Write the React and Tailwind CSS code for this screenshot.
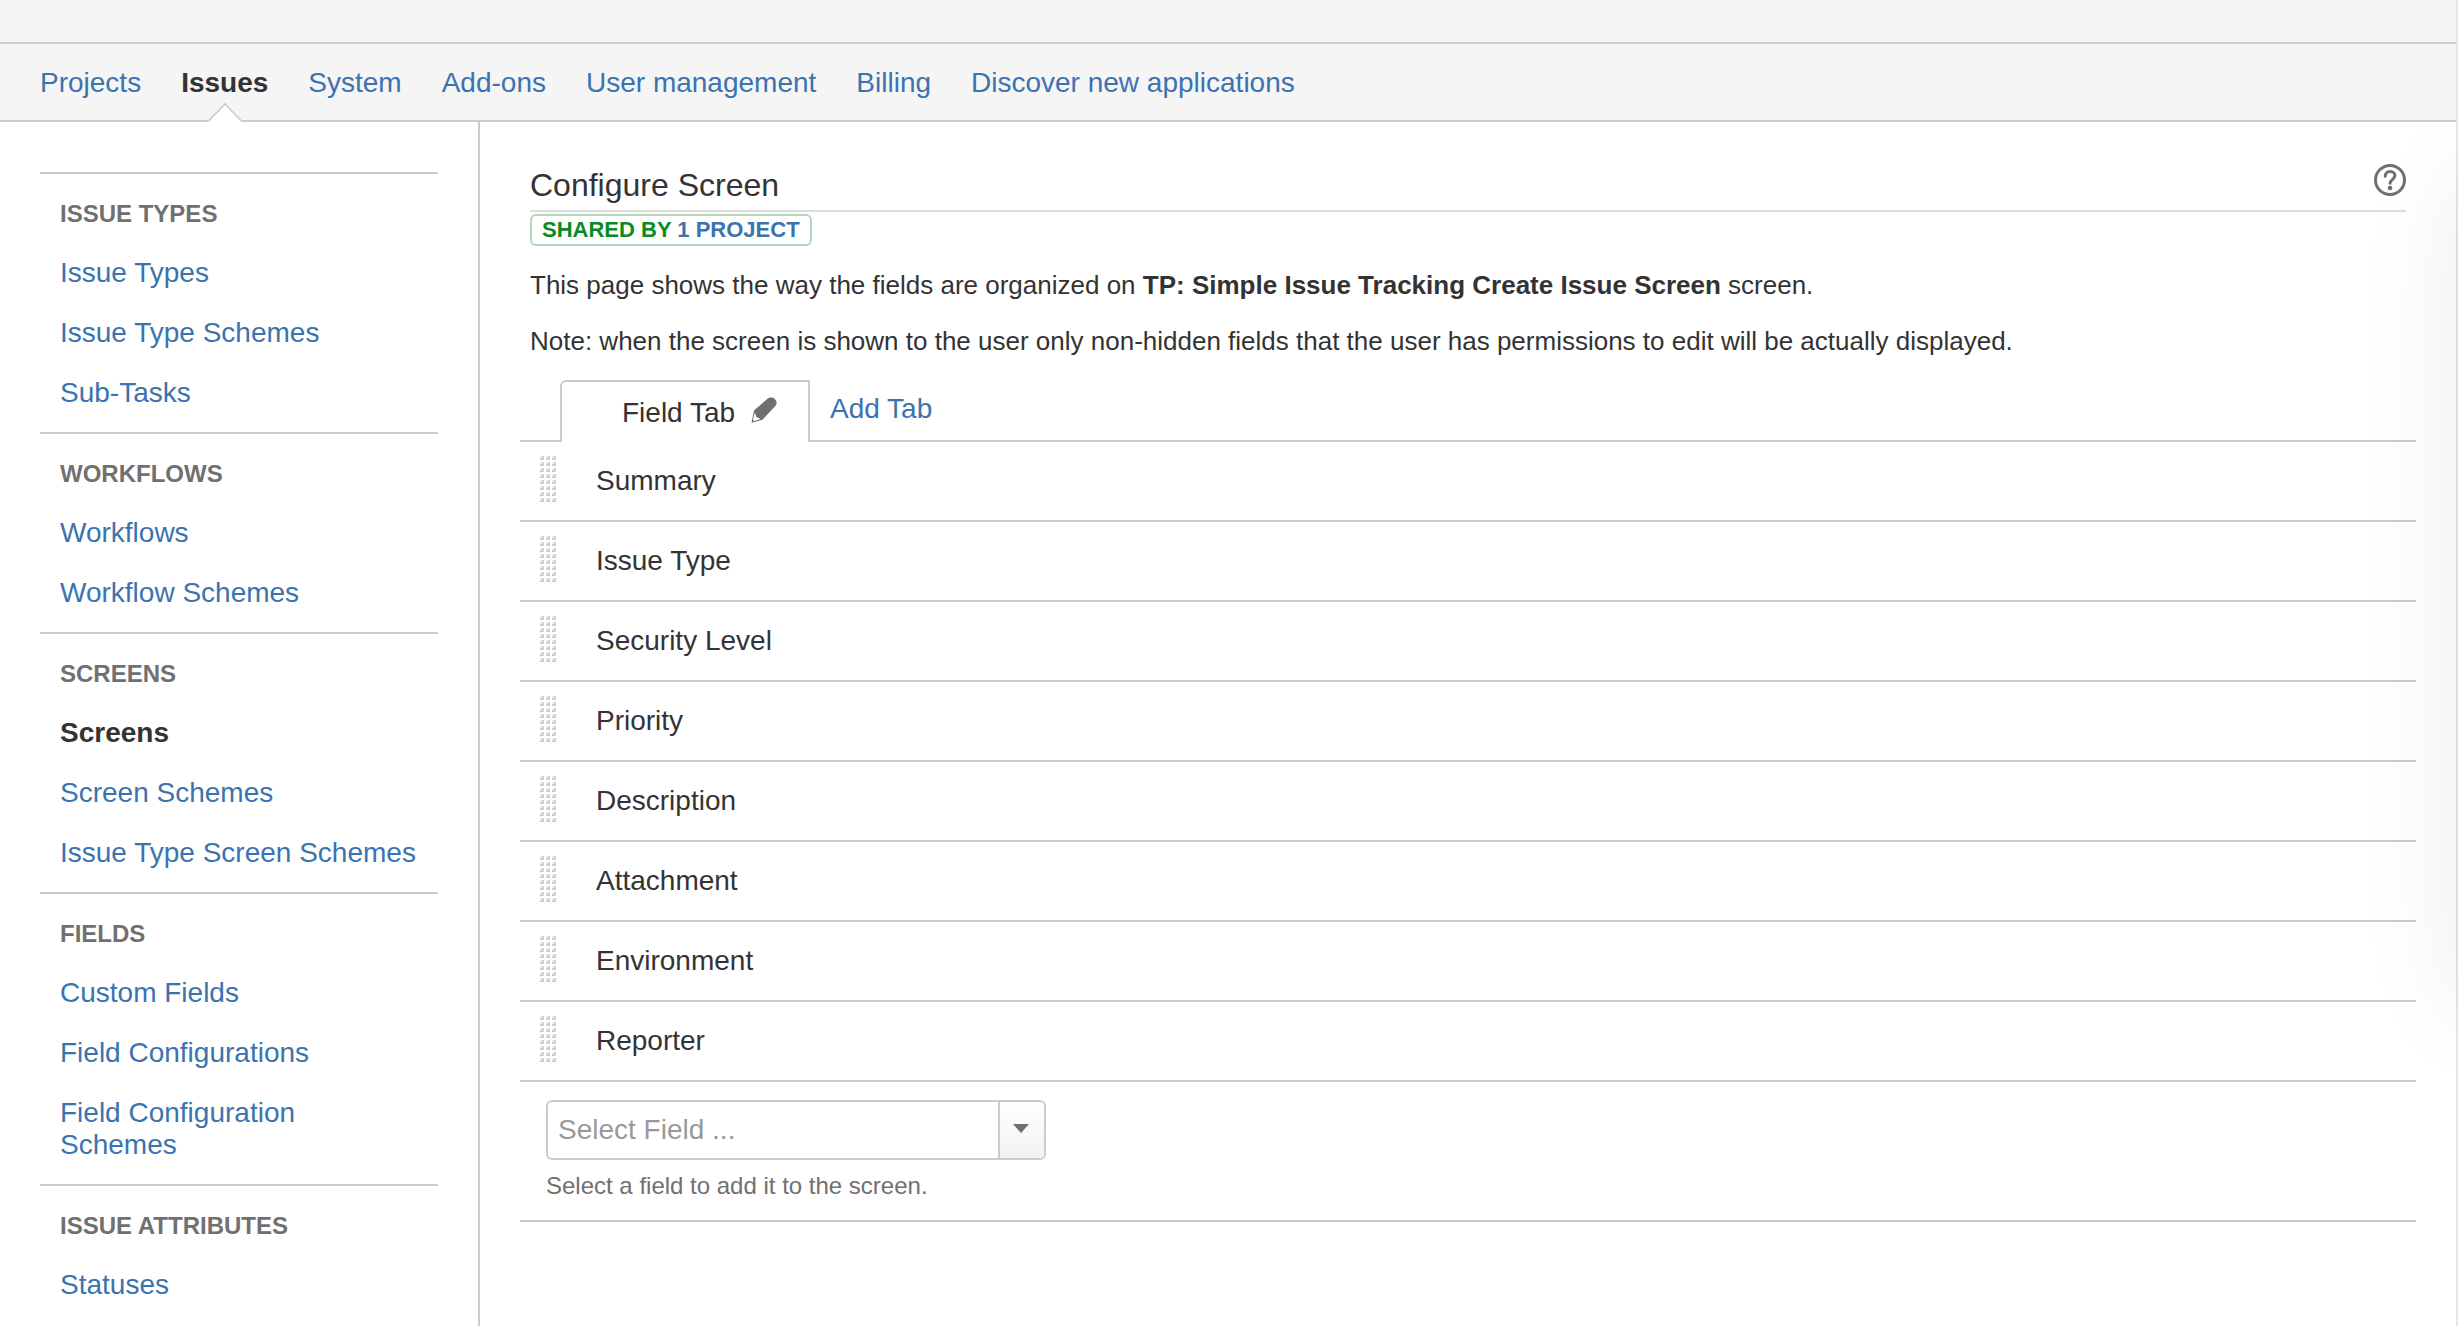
import React from "react";

const navItems = [
  "Projects",
  "Issues",
  "System",
  "Add-ons",
  "User management",
  "Billing",
  "Discover new applications",
];

const sidebarGroups = [
  { title: "ISSUE TYPES", links: ["Issue Types", "Issue Type Schemes", "Sub-Tasks"] },
  { title: "WORKFLOWS", links: ["Workflows", "Workflow Schemes"] },
  { title: "SCREENS", links: ["Screens", "Screen Schemes", "Issue Type Screen Schemes"] },
  { title: "FIELDS", links: ["Custom Fields", "Field Configurations", "Field Configuration Schemes"] },
  { title: "ISSUE ATTRIBUTES", links: ["Statuses"] },
];

const fields = [
  "Summary",
  "Issue Type",
  "Security Level",
  "Priority",
  "Description",
  "Attachment",
  "Environment",
  "Reporter",
];

function TopNav() {
  return (
    <header className="bg-[#f5f5f5]">
      <div className="h-11 border-b-2 border-[#ccc]" />
      <nav className="border-b-2 border-[#ccc] px-10 pb-[21px] pt-[23px]" aria-label="Administration">
        <ul className="flex gap-10">
          {navItems.map((item) => {
            const active = item === "Issues";
            return (
              <li key={item} className="relative">
                <a
                  href="#"
                  aria-current={active ? "page" : undefined}
                  className={active ? "font-bold text-[#333]" : "text-[#3b73af]"}
                >
                  {item}
                </a>
                {active && (
                  <svg
                    className="absolute -bottom-[23px] left-1/2 -translate-x-1/2"
                    width="36"
                    height="20"
                    viewBox="0 0 36 20"
                    aria-hidden="true"
                  >
                    <path d="M1 20 L18 2 L35 20 Z" fill="#fff" />
                    <path d="M1.500 19 L18 2 L34.500 19" fill="none" stroke="#ccc" strokeWidth="1.600" />
                  </svg>
                )}
              </li>
            );
          })}
        </ul>
      </nav>
    </header>
  );
}

function Sidebar() {
  return (
    <aside className="w-[480px] shrink-0 border-r-2 border-[#ccc] px-10 pt-[50px]">
      {sidebarGroups.map((group) => (
        <section key={group.title} className="border-t-2 border-[#ccc] px-5 pb-[23px] pt-6">
          <h2 className="mb-[27px] text-2xl font-bold leading-8 text-[#707070]">{group.title}</h2>
          <ul className="flex flex-col gap-7">
            {group.links.map((link) => (
              <li key={link}>
                <a
                  href="#"
                  className={
                    link === "Screens" ? "block font-bold text-[#333]" : "block text-[#3b73af]"
                  }
                >
                  {link}
                </a>
              </li>
            ))}
          </ul>
        </section>
      ))}
    </aside>
  );
}

function HelpIcon() {
  return (
    <svg width="32" height="32" viewBox="0 0 32 32" fill="none" aria-hidden="true">
      <circle cx="16" cy="16" r="14.500" stroke="#707070" strokeWidth="3" />
      <path
        d="M11.200 12.200c0-2.700 2-4.700 4.900-4.700 2.800 0 4.800 1.700 4.800 4.100 0 1.900-1 2.800-2.500 4-1.600 1.200-2.300 1.900-2.300 3.700"
        stroke="#707070"
        strokeWidth="3"
        strokeLinecap="round"
      />
      <circle cx="16" cy="24" r="2.300" fill="#707070" />
    </svg>
  );
}

function PencilIcon() {
  return (
    <svg width="26" height="26" viewBox="0 0 26 26" aria-hidden="true">
      <path
        d="M3 13.500 L16.500 1.700 C18.500 0 21.500 -0.200 23.800 1.900 C26 4 26.300 6.800 24.300 8.900 L11.500 22.800 L0.500 25.800 Z"
        fill="#707070"
      />
      <path d="M3.800 15.600 L5.400 20 L9.600 21.900 L3.600 23.900 L1.900 22.900 Z" fill="#fff" />
    </svg>
  );
}

function Grip() {
  const cells = [];
  for (let row = 0; row < 8; row++) {
    for (let col = 0; col < 3; col++) {
      cells.push(
        <g key={`${row}-${col}`} transform={`translate(${col * 6} ${row * 6})`}>
          <rect x="0" y="0" width="4" height="4" fill="#ededeb" />
          <rect x="2" y="0" width="2" height="4" fill="#d2d2d0" />
          <rect x="0" y="2" width="4" height="2" fill="#cfcfcc" />
        </g>
      );
    }
  }
  return (
    <svg width="16" height="48" viewBox="0 0 16 48" className="shrink-0" aria-hidden="true">
      {cells}
    </svg>
  );
}

function Tabs() {
  return (
    <div className="flex items-end">
      <div className="w-10 self-stretch border-b-2 border-[#ccc]" />
      <div className="flex h-[62px] w-[250px] items-start gap-4 rounded-tl-md border-x-2 border-t-2 border-[#ccc] pl-[60px] pt-[15px]">
        <span>Field Tab</span>
        <button type="button" aria-label="Rename tab">
          <PencilIcon />
        </button>
      </div>
      <div className="flex-1 self-stretch border-b-2 border-[#ccc] pl-5 pt-[13px]">
        <button type="button" className="text-[#3b73af]">
          Add Tab
        </button>
      </div>
    </div>
  );
}

function AddField() {
  return (
    <div className="border-b-2 border-[#ccc] px-[26px] py-[18px]">
      <div className="flex h-[60px] w-[500px] overflow-hidden rounded-md border-2 border-[#ccc]">
        <input
          id="field-select"
          type="text"
          placeholder="Select Field ..."
          className="min-w-0 flex-1 px-[10px] text-[#333] outline-none placeholder:text-[#999]"
        />
        <button
          type="button"
          aria-label="Show fields"
          className="flex w-[46px] justify-center border-l-2 border-[#ccc] bg-linear-to-b from-white to-[#f2f2f2] pr-[2px] pt-[22px]"
        >
          <svg width="16" height="9" viewBox="0 0 16 9" aria-hidden="true">
            <path d="M0 0 H16 L8 9 Z" fill="#707070" />
          </svg>
        </button>
      </div>
      <label htmlFor="field-select" className="mt-[10px] block text-2xl leading-8 text-[#707070]">
        Select a field to add it to the screen.
      </label>
    </div>
  );
}

function Content() {
  return (
    <main className="min-w-0 flex-1 pl-10 pr-[42px] pt-10">
      <div className="px-[10px]">
        <div className="flex items-start justify-between border-b-2 border-[#ddd] pb-[2px]">
          <h1 className="text-[32px] leading-[46px]">Configure Screen</h1>
          <a href="#" aria-label="Get help" className="pt-[2px]">
            <HelpIcon />
          </a>
        </div>
        <div className="mt-[2px] flex">
          <span className="rounded-md border-2 border-[#b2d8b9] px-[10px] text-[22px] font-bold leading-7 text-[#078c24]">
            SHARED BY{" "}
            <a href="#" className="text-[#3b73af]">
              1 PROJECT
            </a>
          </span>
        </div>
        <p className="mt-[21px] text-[26px] leading-9">
          This page shows the way the fields are organized on{" "}
          <strong>TP: Simple Issue Tracking Create Issue Screen</strong> screen.
        </p>
        <p className="mb-[21px] mt-5 text-[26px] leading-9">
          Note: when the screen is shown to the user only non-hidden fields that the user has
          permissions to edit will be actually displayed.
        </p>
      </div>
      <Tabs />
      <ul>
        {fields.map((field) => (
          <li key={field} className="flex gap-10 border-b-2 border-[#ccc] pb-4 pl-5 pt-[14px]">
            <Grip />
            <span className="pt-[9px]">{field}</span>
          </li>
        ))}
      </ul>
      <AddField />
    </main>
  );
}

export default function App() {
  return (
    <div className="relative flex min-h-screen flex-col overflow-hidden bg-white font-['Liberation_Sans',Arial,sans-serif] text-[28px] leading-8 text-[#333]">
      <TopNav />
      <div className="flex flex-1">
        <Sidebar />
        <Content />
      </div>
      <div className="pointer-events-none absolute inset-y-0 right-0 w-[2px] bg-[#e6e6e6]" />
      <div className="pointer-events-none absolute bottom-[320px] left-full top-[180px] w-96 shadow-[0_0_100px_rgba(0,0,0,0.08)]" />
    </div>
  );
}
